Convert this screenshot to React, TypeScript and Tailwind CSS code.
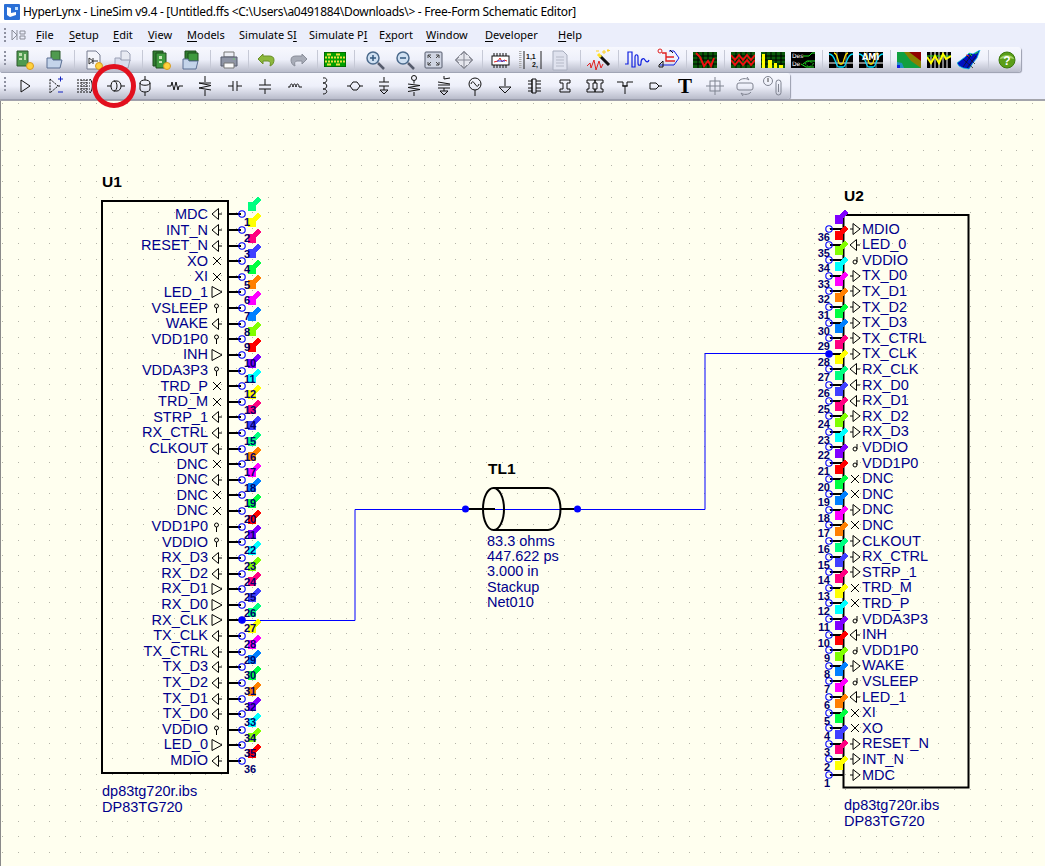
import React from "react";

const S = ({ children }: { children: React.ReactNode }) => (
  <svg width={24} height={24} viewBox="0 0 24 24" fill="none" stroke="#111" strokeWidth={1} className="shrink-0">
    {children}
  </svg>
);

const Board = () => (
  <>
    <path d="M4 3h11v15H4z" fill="#4f9a4f" stroke="#2e5a2e" />
    <path d="M6 5h3v3H6zM6 10h3v2H6zM11 6h2v6h-2z" fill="#bfe0b0" stroke="none" />
    <circle cx="17" cy="18" r="3.5" fill="#ffd23c" stroke="#d89a20" />
  </>
);
const Folder = ({ grey }: { grey?: boolean }) => (
  <>
    {!grey && <path d="M8 3h9v9H8z" fill="#4f9a4f" stroke="#2e5a2e" />}
    {grey && <path d="M10 3h6l3 3v7H10z" fill="#e8eaf2" stroke="#9aa0b4" />}
    <path d="M4 10h5l1 2h9l-2 8H4z" fill={grey ? "#d8dcec" : "#c4d4ea"} stroke={grey ? "#9aa0b4" : "#5b6f93"} />
  </>
);
const Sheet = () => (
  <>
    <path d="M6 3h9l4 4v14H6z" fill="#f4f5fa" stroke="#777d90" />
    <path d="M8 10l4 3-4 3zM12 10v6M12 13h5" stroke="#333" />
    <circle cx="18" cy="18" r="3.5" fill="#ffd23c" stroke="#d89a20" />
  </>
);
const Stack = () => (
  <>
    <path d="M4 3h10v15H4z" fill="#2f7d2f" stroke="#1c4d1c" />
    <path d="M7 5h10v15H7z" fill="#3e9a3e" stroke="#1c4d1c" />
    <path d="M10 8h3v3h-3zM10 13h3v2h-3z" fill="#c8e8b8" stroke="none" />
    <circle cx="18" cy="18" r="3.5" fill="#ffd23c" stroke="#d89a20" />
  </>
);
const StackOpen = () => (
  <>
    <path d="M6 3h11v9H6z" fill="#2f7d2f" stroke="#1c4d1c" />
    <path d="M9 5h10v8H9z" fill="#3e9a3e" stroke="#1c4d1c" />
    <path d="M4 11h5l1 2h9l-2 8H4z" fill="#c4d4ea" stroke="#5b6f93" />
  </>
);
const Printer = () => (
  <>
    <path d="M7 4h10v5H7z" fill="#eceef5" stroke="#777" />
    <path d="M4 9h16v9H4z" fill="#8f95a6" stroke="#555b6c" />
    <path d="M7 15h10v5H7z" fill="#fafafa" stroke="#777" />
    <path d="M16 11h2" stroke="#6fcf6f" />
  </>
);
const Undo = ({ grey }: { grey?: boolean }) => (
  <path
    d="M8 6L3 11l5 5v-3h5c2 0 3 2 2 5 3-1 4-4 4-6 0-3-2-4-5-4H8z"
    fill={grey ? "#a8acb8" : "#8cb83c"}
    stroke={grey ? "#8a8e9a" : "#6a8f28"}
    transform={grey ? "matrix(-1 0 0 1 24 0)" : undefined}
  />
);
const Stackup = () => (
  <svg width={22} height={15} viewBox="0 0 22 15" className="shrink-0">
    <rect width="22" height="15" fill="#00a000" stroke="#004000" />
    <path d="M3 2.500h16M3 12.500h16" stroke="#e8e040" strokeDasharray="4 5" strokeWidth={2} />
    <path d="M1 5.500h20M1 9.500h20" stroke="#ece040" strokeWidth={2} strokeDasharray="2 1" />
  </svg>
);
const Mag = ({ plus }: { plus?: boolean }) => (
  <>
    <circle cx="10" cy="10" r="6" fill="#cfe0f2" stroke="#4b6a8c" strokeWidth={1.5} />
    <path d="M7 10h6" stroke="#33587e" strokeWidth={1.5} />
    {plus && <path d="M10 7v6" stroke="#33587e" strokeWidth={1.5} />}
    <path d="M15 15l6 6" stroke="#555b6c" strokeWidth={2.5} />
  </>
);
const Fit = () => (
  <>
    <rect x="3" y="4" width="17" height="16" rx="1" fill="#cfd4e2" stroke="#555b6c" />
    <path d="M6 7l3 3M17 7l-3 3M6 17l3-3M17 17l-3-3M6 7h3M6 7v3M17 7h-3M17 7v3M6 17h3M6 17v-3M17 17h-3M17 17v-3" stroke="#444" />
  </>
);
const Pan = () => (
  <>
    <path d="M12 3l9 9-9 9-9-9z" fill="#e6e7ee" stroke="#9a9ca6" />
    <path d="M12 5v14M5 12h14M9 7l3-3 3 3M9 17l3 3 3-3M7 9l-3 3 3 3M17 9l3 3-3 3" stroke="#888a96" />
  </>
);
const Chip = () => (
  <>
    <path d="M5 5v3M8 5v3M11 5v3M14 5v3M17 5v3M5 17v3M8 17v3M11 17v3M14 17v3M17 17v3" stroke="#111" />
    <rect x="3" y="8" width="17" height="9" fill="#fff" stroke="#111" />
    <path d="M5 14l4-1 2-3 2 4 2-2 3 1" stroke="#e02020" />
    <path d="M8 13h8" stroke="#2040e0" />
  </>
);
const Matrix = () => (
  <>
    <path d="M5 3v18" stroke="#222" />
    <path d="M1 3v18" stroke="#aaa" strokeDasharray="1 1" strokeWidth={3} />
    <text x="7" y="11" fontSize="7" fontFamily="Liberation Sans" fontWeight="700" fill="#111" stroke="none">1,1</text>
    <text x="13" y="19" fontSize="7" fontFamily="Liberation Sans" fontWeight="700" fill="#111" stroke="none">2,</text>
    <path d="M22 3v18" stroke="#222" />
  </>
);
const Doc = () => (
  <>
    <path d="M5 3h10l4 4v15H5z" fill="#dfe2ee" stroke="#a8adbd" />
    <path d="M8 9h8M8 12h8M8 15h8M8 18h8" stroke="#b6bac8" />
  </>
);
const Wand = () => (
  <svg width={24} height={24} viewBox="0 0 24 24" fill="none" className="shrink-0">
    <path d="M0 18l3-3 1 5 3-8 2 10 3-9 2 7 2-4" stroke="#e02020" />
    <path d="M13 8l9 9" stroke="#111" strokeWidth={3} />
    <path d="M11 6l3 3" stroke="#ffe020" strokeWidth={3} />
    <path d="M17 2v4M15 4h4M21 1v3M20 2.500h3M9 3h3" stroke="#ffd020" />
  </svg>
);
const WaveBlue = () => (
  <svg width={26} height={20} viewBox="0 0 26 20" fill="none" className="shrink-0">
    <path d="M1 14h3V2h4v15h3V7c0-3 3-3 3 0v6c0 3 3 3 3 0 0-5 3-5 4-3 1 2 3 3 4 0" stroke="#1020e0" strokeWidth={1.2} />
  </svg>
);
const Net = () => (
  <svg width={24} height={24} viewBox="0 0 24 24" fill="none" className="shrink-0">
    <circle cx="4" cy="3" r="2" stroke="#e02020" />
    <path d="M6 5h4v4h8M10 9v4h9" stroke="#e02020" strokeWidth={1.4} />
    <path d="M13 3h5l5 7-5 7h-5M4 17h9" stroke="#1020e0" />
    <path d="M7 13L3 17v2h4z" stroke="#111" />
    <path d="M14 2l3 3" stroke="#111" />
  </svg>
);
const Scope = ({ kind }: { kind: "green" | "red" | "bars" | "des" | "eye" | "ami" | "map" | "yellow" }) => {
  const grid = (c: string, step = 5) => {
    const p: string[] = [];
    for (let x = step; x < 24; x += step) p.push(`M${x} 0v16`);
    for (let y = 4; y < 16; y += 4) p.push(`M0 ${y}h24`);
    return <path d={p.join("")} stroke={c} strokeWidth={1} />;
  };
  return (
    <svg width={24} height={16} viewBox="0 0 24 16" fill="none" className="shrink-0">
      <rect width="24" height="16" fill={kind === "green" || kind === "red" || kind === "bars" ? "#0a5a0a" : "#000"} />
      {(kind === "green" || kind === "red" || kind === "bars") && grid("#000")}
      {kind === "green" && <path d="M3 1l4 4 4 9 4-5 3 5 3-8" stroke="#f01010" strokeWidth={2} />}
      {kind === "red" && (
        <>
          <path d="M0 3l4 5 4-5 4 5 4-5 4 5 4-5" stroke="#f01010" strokeWidth={2} />
          <path d="M0 8l4 5 4-5 4 5 4-5 4 5 4-5" stroke="#f01010" strokeWidth={2} />
        </>
      )}
      {kind === "bars" && <path d="M1 2h3v14H1zM7 8h4v8H7zM13 11h3v5h-3zM18 13h4v3h-4z" fill="#ffff00" />}
      {kind === "des" && (
        <>
          <text x="1" y="6" fontSize="6" fontFamily="DejaVu Sans" fill="#fff">Des</text>
          <text x="1" y="14" fontSize="6" fontFamily="DejaVu Sans" fill="#fff">De</text>
          <path d="M12 4h6l3-3h3M12 12l4-3h8M10 12l5 3h8" stroke="#20e020" />
          <path d="M14 12l4-3 5 3-5 3z" stroke="#20e020" strokeDasharray="1 1" />
        </>
      )}
      {(kind === "eye" || kind === "ami") && (
        <>
          <path d="M0 11h24" stroke="#fff" />
          <path d="M8 0v16M17 0v16" stroke="#888" />
          <path d="M0 2c7 0 6 13 10 13h4c4 0 3-13 10-13" stroke="#00e0ff" strokeWidth={1.3} />
          <path d="M5 1c4 0 4 11 6 11h2c2 0 2-11 6-11" stroke="#ffe000" strokeWidth={1.3} />
          {kind === "ami" && <text x="3" y="8" fontSize="8" fontWeight="700" fontFamily="DejaVu Sans" fill="#fff">AMI</text>}
        </>
      )}
      {kind === "map" && (
        <>
          <rect width="24" height="16" fill="#8a8000" />
          <path d="M0 0h7l7 9 10 7H0z" fill="#10a040" />
          <path d="M0 10l5 1 2 5H0z" fill="#2090c0" />
          <path d="M0 13h3v3H0z" fill="#1020e0" />
          <path d="M12 0h12v9z" fill="#900000" />
        </>
      )}
      {kind === "yellow" && (
        <>
          <path d="M4 0v16M8 0v16M12 0v16M16 0v16M20 0v16" stroke="#fff" />
          <path d="M0 4h24" stroke="#20d020" />
          <path d="M0 5l4 6 4-7 4 7 4-9 3 5 5-3" stroke="#ffff00" strokeWidth={2} />
        </>
      )}
    </svg>
  );
};
const Blob = () => (
  <svg width={24} height={20} viewBox="0 0 24 20" className="shrink-0">
    <path d="M0 13l8-6 4-4 4 1 7-4-3 8-4 5-4 6-6-1-4-2z" fill="#0010c0" stroke="#00d0e0" strokeWidth={0.7} />
    <path d="M6 9l10 9M10 6l8 8M15 4l-9 13M19 6l-9 12" stroke="#111" strokeWidth={0.7} />
    <path d="M12 3l3 3M18 4l3-2" stroke="#20e020" />
    <path d="M9 5l3 1" stroke="#e02020" />
  </svg>
);
const Help = () => (
  <svg width={18} height={18} viewBox="0 0 18 18" className="shrink-0">
    <circle cx="9" cy="9" r="8" fill="#5a9e18" stroke="#3c7a0c" />
    <path d="M2 8c1-5 13-5 14 0-4-1.500-10-1.500-14 0z" fill="#a5d46a" />
    <text x="9" y="13.500" textAnchor="middle" fontSize="12" fontWeight="700" fontFamily="Liberation Sans" fill="#fff">?</text>
  </svg>
);

const G = "#7f8390";
const t2: Record<string, React.ReactNode> = {
  tri: <path d="M8 6l9 6-9 6z" />,
  opamp: (
    <>
      <path d="M7 5l8 7-8 7z" strokeDasharray="2 1" />
      <path d="M15 12h2" />
      <path d="M15 5h5M17.500 2.500v5M15 18h5" stroke="#1020c0" />
    </>
  ),
  hatch: (
    <>
      <path d="M4 6h13M4 9h13M4 12h13M4 15h13M4 18h13" strokeDasharray="2 1" />
      <path d="M9 6v12M13 6v12" strokeDasharray="1 1" />
      <path d="M17 5c3 3 3 11 0 14" />
    </>
  ),
  line: <path d="M4 12h4M18 12h4M11 7h3a4 5 0 0 1 0 10h-3a3 5 0 0 1 0-10zM11 7a3 5 0 0 1 0 10" />,
  vline: <path d="M12 2v4M12 18v4M7 9c0-4 10-4 10 0v6c0 4-10 4-10 0zM7 9c0 3 10 3 10 0" />,
  res: <path d="M4 12h4l1-4 2 8 2-8 2 8 1-4h4" />,
  rlat: <path d="M12 2v6M12 16v6M6 9l12 0M6 9l12 2.500-12 2.500 12 2" />,
  cap: <path d="M5 12h5M10 7v10M14 7v10M14 12h5" />,
  capv: <path d="M12 5v6M6 11h12M6 15h12M12 15v5" />,
  ind: <path d="M5 13h2c0-4 3-4 3 0 0-4 3-4 3 0 0-4 3-4 3 0h3" />,
  indv: <path d="M10 4c5-1 5 5 0 5 5 0 5 6 0 6 5 0 5 5 0 5" />,
  ferr: <path d="M4 12h3M17 12h3M7 12l3-4h4l3 4-3 4h-4z" />,
  capg: <path d="M12 3v5M7 8h10M7 12h10M12 12v4M8 16h8l-4 4z" />,
  pull: (
    <>
      <circle cx="12" cy="4" r="2.500" />
      <path d="M12 6.500v3M6 10l12 1.500-12 2 12 2-12 2M12 18v4" />
    </>
  ),
  rcg: <path d="M12 2v3l6-1M6 8l12 2M6 11h12M6 14h12M12 14v3M8 17h8l-4 4z" />,
  src: (
    <>
      <circle cx="12" cy="10" r="6" />
      <path d="M8 10c1-3 2-3 4 0s3 3 4 0M12 16v6" />
    </>
  ),
  gnd: <path d="M12 4v8M6 13h12l-6 6z" />,
  conn: <path d="M9 5v14M9 5h4v14H9zM5 7h4M5 10h4M5 14h4M5 17h4M13 7h5M13 10h5M13 14h5M13 17h5" />,
  ibeam: <path d="M7 6h10v3h-3v6h3v3H7v-3h3V9H7z" />,
  dbl: (
    <>
      <path d="M4 6h8v3h-2v6h2v3H4v-3h2V9H4z" />
      <path d="M12 6h8v3h-2v6h2v3h-8v-3h2V9h-2z" />
    </>
  ),
  via: <path d="M4 8h6v4h4V8h6M9 12h6M12 12v8" />,
  probe: <path d="M7 9h6l3 3-3 3H7zM16 12h3" />,
  cross: (
    <g stroke={G}>
      <rect x="7" y="7" width="10" height="10" />
      <path d="M12 3v18M3 12h18" />
    </g>
  ),
  rot: (
    <g stroke={G}>
      <rect x="4" y="9" width="16" height="7" rx="2" />
      <path d="M6 7c2-3 8-3 10-1l-2-3M18 18c-2 3-8 3-10 1l2 3" />
    </g>
  ),
  clip: (
    <g stroke={G}>
      <circle cx="7" cy="7" r="4.500" />
      <path d="M7 4v4" stroke="#444" />
      <rect x="15" y="6" width="5" height="15" rx="2.500" />
      <path d="M17.500 10v8" />
    </g>
  ),
};

type Item = { x: number; n?: React.ReactNode; sep?: boolean; w?: number };
const wrap = (n: React.ReactNode) => <S>{n}</S>;

const row1: Item[] = [
  { x: 25, n: wrap(<Board />) },
  { x: 55, n: wrap(<Folder />) },
  { x: 74, sep: true },
  { x: 93, n: wrap(<Sheet />) },
  { x: 123, n: wrap(<Folder grey />) },
  { x: 142, sep: true },
  { x: 161, n: wrap(<Stack />) },
  { x: 191, n: wrap(<StackOpen />) },
  { x: 210, sep: true },
  { x: 229, n: wrap(<Printer />) },
  { x: 248, sep: true },
  { x: 267, n: wrap(<Undo />) },
  { x: 298, n: wrap(<Undo grey />) },
  { x: 317, sep: true },
  { x: 335, n: <Stackup /> },
  { x: 354, sep: true },
  { x: 375, n: wrap(<Mag plus />) },
  { x: 405, n: wrap(<Mag />) },
  { x: 434, n: wrap(<Fit />) },
  { x: 464, n: wrap(<Pan />) },
  { x: 482, sep: true },
  { x: 501, n: wrap(<Chip />) },
  { x: 531, n: wrap(<Matrix />) },
  { x: 560, n: wrap(<Doc />) },
  { x: 580, sep: true },
  { x: 599, n: <Wand /> },
  { x: 618, sep: true },
  { x: 637, n: <WaveBlue /> },
  { x: 668, n: <Net /> },
  { x: 686, sep: true },
  { x: 705, n: <Scope kind="green" /> },
  { x: 724, sep: true },
  { x: 743, n: <Scope kind="red" /> },
  { x: 773, n: <Scope kind="bars" /> },
  { x: 803, n: <Scope kind="des" /> },
  { x: 822, sep: true },
  { x: 841, n: <Scope kind="eye" /> },
  { x: 871, n: <Scope kind="ami" /> },
  { x: 890, sep: true },
  { x: 909, n: <Scope kind="map" /> },
  { x: 939, n: <Scope kind="yellow" /> },
  { x: 969, n: <Blob /> },
  { x: 988, sep: true },
  { x: 1007, n: <Help />, w: 18 },
];

const row2x: [number, string][] = [
  [25, "tri"], [55, "opamp"], [85, "hatch"], [115, "line"], [145, "vline"], [175, "res"], [205, "rlat"], [235, "cap"],
  [265, "capv"], [295, "ind"], [325, "indv"], [355, "ferr"], [384, "capg"], [414, "pull"], [444, "rcg"], [475, "src"],
  [505, "gnd"], [535, "conn"], [565, "ibeam"], [595, "dbl"], [625, "via"], [655, "probe"], [685, "T"], [715, "cross"],
  [745, "rot"], [773, "clip"],
];
const row2: Item[] = row2x.map(([x, k]) =>
  k === "T"
    ? { x, n: <span className="w-6 text-center text-[21px] leading-6 font-bold text-black font-['Liberation_Serif',serif]">T</span> }
    : { x, n: wrap(t2[k]) }
);

function Bar({ items, className }: { items: Item[]; className: string }) {
  let end = 0;
  return (
    <div className={`relative flex items-center rounded-r-[3px] bg-gradient-to-b from-[#f7f8fe] via-[#eef0fa] to-[#b9bccb] shadow-[1px_1px_1px_#9a9dad] ${className}`}>
      <div className="absolute left-[4px] top-[4px] flex flex-col gap-[2px]">
        {[0, 1, 2, 3].map((i) => (
          <span key={i} className="h-[2px] w-[2px] bg-[#8d90a0]" />
        ))}
      </div>
      {items.map((it, i) => {
        const w = it.w ?? 24;
        const ml = it.x - w / 2 - end;
        end = it.x + w / 2;
        return (
          <div key={i} className="flex shrink-0 items-center justify-center" style={{ marginLeft: ml, width: w }}>
            {it.sep ? <span className="h-[20px] w-px bg-[#c6c9d6]" /> : it.n}
          </div>
        );
      })}
    </div>
  );
}

const menu: [string, string, string, number][] = [
  ["", "F", "ile", 36], ["", "S", "etup", 69], ["", "E", "dit", 113], ["", "V", "iew", 148], ["", "M", "odels", 187],
  ["Simulate S", "I", "", 239], ["Simulate P", "I", "", 309], ["E", "x", "port", 379], ["", "W", "indow", 426],
  ["", "D", "eveloper", 485], ["", "H", "elp", 558],
];

const u1: [string, string][] = [
  ["MDC", "i"], ["INT_N", "i"], ["RESET_N", "i"], ["XO", "x"], ["XI", "x"], ["LED_1", "o"], ["VSLEEP", "p"], ["WAKE", "i"],
  ["VDD1P0", "p"], ["INH", "o"], ["VDDA3P3", "p"], ["TRD_P", "x"], ["TRD_M", "x"], ["STRP_1", "i"], ["RX_CTRL", "i"], ["CLKOUT", "i"],
  ["DNC", "x"], ["DNC", "i"], ["DNC", "x"], ["DNC", "x"], ["VDD1P0", "p"], ["VDDIO", "p"], ["RX_D3", "i"], ["RX_D2", "i"],
  ["RX_D1", "o"], ["RX_D0", "o"], ["RX_CLK", "o"], ["TX_CLK", "i"], ["TX_CTRL", "i"], ["TX_D3", "i"], ["TX_D2", "i"], ["TX_D1", "i"],
  ["TX_D0", "i"], ["VDDIO", "p"], ["LED_0", "o"], ["MDIO", "i"],
];
const u2 = [...u1].reverse();

const SP = "#00ff80", YE = "#ffff00", PK = "#ff0080", BL = "#4040ff", GR = "#00ff40", OR = "#ff8000", MG = "#ff00ff", AZ = "#0080ff", LM = "#80ff00", RD = "#ff0000", PU = "#8000ff", CY = "#00ffff";
const colors1 = [SP, YE, PK, BL, GR, OR, MG, AZ, LM, RD, PU, CY, YE, PK, BL, SP, OR, MG, AZ, GR, RD, PU, CY, LM, PK, BL, SP, YE, MG, AZ, GR, OR, PU, CY, LM, RD];
const colors2 = u2.map((_, k) => (k === 0 ? PU : k === 4 ? MG : k === 8 ? PK : colors1[36 - k]));

const y1 = (k: number) => Math.round(214.3 + 15.62 * k);
const y2 = (k: number) => Math.round(229 + 15.6 * k);
const ty1 = (k: number) => Math.round(214 + 15.6 * k);
const ty2 = (k: number) => Math.round(228.5 + 15.6 * k);

function arrowPath(x: number, b: number) {
  return `M${x} ${b}V${b - 9}H${x + 4}L${x + 10} ${b - 14}L${x + 13} ${b - 11}L${x + 8} ${b - 5.5}V${b}Z`;
}

function Sym({ t, x, y, left }: { t: string; x: number; y: number; left: boolean }) {
  if (t === "x") return <path d={`M${x + 1} ${y - 4}L${x + 9} ${y + 4}M${x + 9} ${y - 4}L${x + 1} ${y + 4}`} />;
  if (t === "p")
    return left ? (
      <>
        <circle cx={x + 5} cy={y + 2} r={2} />
        <path d={`M${x + 7} ${y + 2}V${y - 3}`} />
      </>
    ) : (
      <>
        <circle cx={x + 4.5} cy={y - 2} r={2} />
        <path d={`M${x + 4.5} ${y}V${y + 5}`} />
      </>
    );
  const pointsLeft = left ? t === "o" : t === "i";
  return pointsLeft ? (
    <path d={`M${x} ${y}L${x + 6.5} ${y - 5.5}V${y + 5.5}ZM${x + 6.5} ${y}H${x + 10}`} fill="#ffffef" />
  ) : left ? (
    <path d={`M${x} ${y}H${x + 3}M${x + 3} ${y - 5.5}L${x + 10} ${y}L${x + 3} ${y + 5.5}Z`} fill="#ffffef" />
  ) : (
    <path d={`M${x} ${y - 5.5}L${x + 10} ${y}L${x} ${y + 5.5}Z`} fill="#ffffef" />
  );
}

const OY = 101;
const TXT = "absolute whitespace-nowrap leading-4 text-[14.5px] text-[#00008c] font-['Liberation_Sans',Arial,sans-serif]";
const HEAD = "absolute whitespace-nowrap leading-4 text-[15.5px] font-bold text-black font-['Liberation_Sans',Arial,sans-serif]";
const NUM = "absolute whitespace-nowrap leading-3 text-[11px] font-bold text-[#00006a] font-['Liberation_Sans',Arial,sans-serif]";

function dots() {
  let d = "";
  for (let i = 0; i < 68; i++)
    for (let j = 0; j < 50; j++) d += `M${Math.round(2.4 + 15.6 * i)} ${Math.round(103 + 15.6 * j)}h1v1h-1z`;
  return d;
}

export default function App() {
  return (
    <div className="relative flex h-[866px] w-[1045px] flex-col overflow-hidden bg-[#ebeefb]">
      <div className="flex h-[23px] items-center gap-[3px] bg-white pl-[4px] text-[12px] text-black font-['Noto_Sans',sans-serif]">
        <svg width={16} height={16} viewBox="0 0 16 16" className="shrink-0">
          <rect width="16" height="16" rx="1" fill="#2a6fd6" />
          <path d="M3 3l4 1v5l5-1v3l-6 2-3-2z" fill="#fff" />
          <path d="M11 3h3v3h-3z" fill="#bfe0ff" />
        </svg>
        <span className="tracking-[-0.29px]">HyperLynx - LineSim v9.4 - [Untitled.ffs &lt;C:\Users\a0491884\Downloads\&gt; - Free-Form Schematic Editor]</span>
      </div>

      <div className="flex h-[23px] items-center pt-px text-[11px] text-black font-['Noto_Sans',sans-serif]">
        <div className="ml-[4px] flex flex-col gap-[2px]">
          {[0, 1, 2, 3].map((i) => (
            <span key={i} className="h-[2px] w-[2px] bg-[#8d90a0]" />
          ))}
        </div>
        <svg width={15} height={12} viewBox="0 0 15 12" fill="none" stroke="#8a8d98" className="ml-[5px] mr-[10px] shrink-0">
          <path d="M1 1l5 5-5 5zM6 1v10M9 2h5v3H9zM9 7h5v3H9z" />
        </svg>
        {menu.map(([a, u, b, x], i) => (
          <span key={i} className="shrink-0 whitespace-nowrap" style={{ width: (i < menu.length - 1 ? menu[i + 1][3] : x + 40) - x }}>
            {a}
            <span className="underline underline-offset-2">{u}</span>
            {b}
          </span>
        ))}
      </div>

      <div className="flex flex-col gap-px pt-px">
        <Bar items={row1} className="h-[25px] w-[1021px]" />
        <Bar items={row2} className="h-[26px] w-[790px]" />
      </div>
      <div className="h-[2px] shrink-0 bg-[#a3a4ab]" />

      <div className="relative flex-1 border-l border-[#8a8a8a] bg-[#ffffef]">
        <svg width={1045} height={765} viewBox={`1 ${OY} 1045 765`} className="absolute left-0 top-0" fill="none">
          <path d={dots()} fill="#b4b4a8" shapeRendering="crispEdges" />

          <rect x={102} y={201} width={126} height={572} stroke="#000" strokeWidth={2} />
          <rect x={843.5} y={215} width={125} height={572.500} stroke="#000" strokeWidth={2} />

          <path d="M243 620.500H355V509.500H577M577 509.500H705V353.500H829" stroke="#0000ff" />
          <g stroke="#000" strokeWidth={2}>
            <path d="M465 509H495M561 509H577" />
            {u1.map((_, k) => (
              <path key={k} d={`M228 ${y1(k)}H241`} />
            ))}
            {u2.map((_, k) => (
              <path key={k} d={`M830 ${y2(k)}H843`} />
            ))}
          </g>

          <g stroke="#000" strokeWidth={2} fill="none">
            <path d="M493.500 488H548a12.500 21 0 0 1 0 42H493.500" />
            <ellipse cx={493.500} cy={509} rx={10.500} ry={21} />
          </g>

          {u1.map(([, t], k) => (
            <g key={k} stroke="#000">
              <Sym t={t} x={212} y={y1(k)} left={false} />
            </g>
          ))}
          {u2.map(([, t], k) => (
            <g key={k} stroke="#000">
              <Sym t={t} x={850} y={y2(k)} left={true} />
            </g>
          ))}

          {u1.map((_, k) => (
            <circle key={k} cx={242} cy={y1(k)} r={3.2} stroke="#0000ff" strokeWidth={1.1} fill={k === 26 ? "#0000ff" : "none"} />
          ))}
          {u2.map((_, k) => (
            <circle key={k} cx={829} cy={y2(k)} r={3.2} stroke="#0000ff" strokeWidth={1.1} fill={k === 8 ? "#0000ff" : "none"} />
          ))}
          <circle cx={465.500} cy={509} r={3.500} fill="#0000ff" />
          <circle cx={577.500} cy={509} r={3.500} fill="#0000ff" />

          <g shapeRendering="crispEdges">
            {colors1.map((c, k) => (
              <path key={k} d={arrowPath(248, y1(k) - 3)} fill={c} />
            ))}
            {colors2.map((c, k) => (
              <path key={k} d={arrowPath(835, y2(k) - 5)} fill={c} />
            ))}
          </g>
        </svg>

        <span className={HEAD} style={{ left: 101, top: 174 - OY }}>U1</span>
        <span className={HEAD} style={{ left: 843, top: 188 - OY }}>U2</span>
        <span className={HEAD} style={{ left: 487, top: 461 - OY }}>TL1</span>

        {u1.map(([n], k) => (
          <React.Fragment key={k}>
            <span className={TXT} style={{ right: 1045 - 208, top: ty1(k) - 8 - OY }}>{n}</span>
            <span className={NUM} style={{ left: 243, top: y1(k) + 2 - OY }}>{k + 1}</span>
          </React.Fragment>
        ))}
        {u2.map(([n], k) => (
          <React.Fragment key={k}>
            <span className={TXT} style={{ left: 861, top: ty2(k) - 8 - OY }}>{n}</span>
            <span className={NUM} style={{ right: 1045 - 830, top: y2(k) + 2 - OY }}>{36 - k}</span>
          </React.Fragment>
        ))}

        <div className={TXT} style={{ left: 101, top: 783 - OY }}>
          dp83tg720r.ibs
          <br />
          DP83TG720
        </div>
        <div className={TXT} style={{ left: 843, top: 797 - OY }}>
          dp83tg720r.ibs
          <br />
          DP83TG720
        </div>
        <div className={`${TXT} !leading-[15.2px]`} style={{ left: 486, top: 534 - OY }}>
          83.3 ohms
          <br />
          447.622 ps
          <br />
          3.000 in
          <br />
          Stackup
          <br />
          Net010
        </div>
      </div>

      <svg width={50} height={50} viewBox="0 0 50 50" fill="none" className="absolute left-[89px] top-[61px]">
        <circle cx={25} cy={25} r={19.500} stroke="#e2101e" strokeWidth={5} />
      </svg>
    </div>
  );
}
